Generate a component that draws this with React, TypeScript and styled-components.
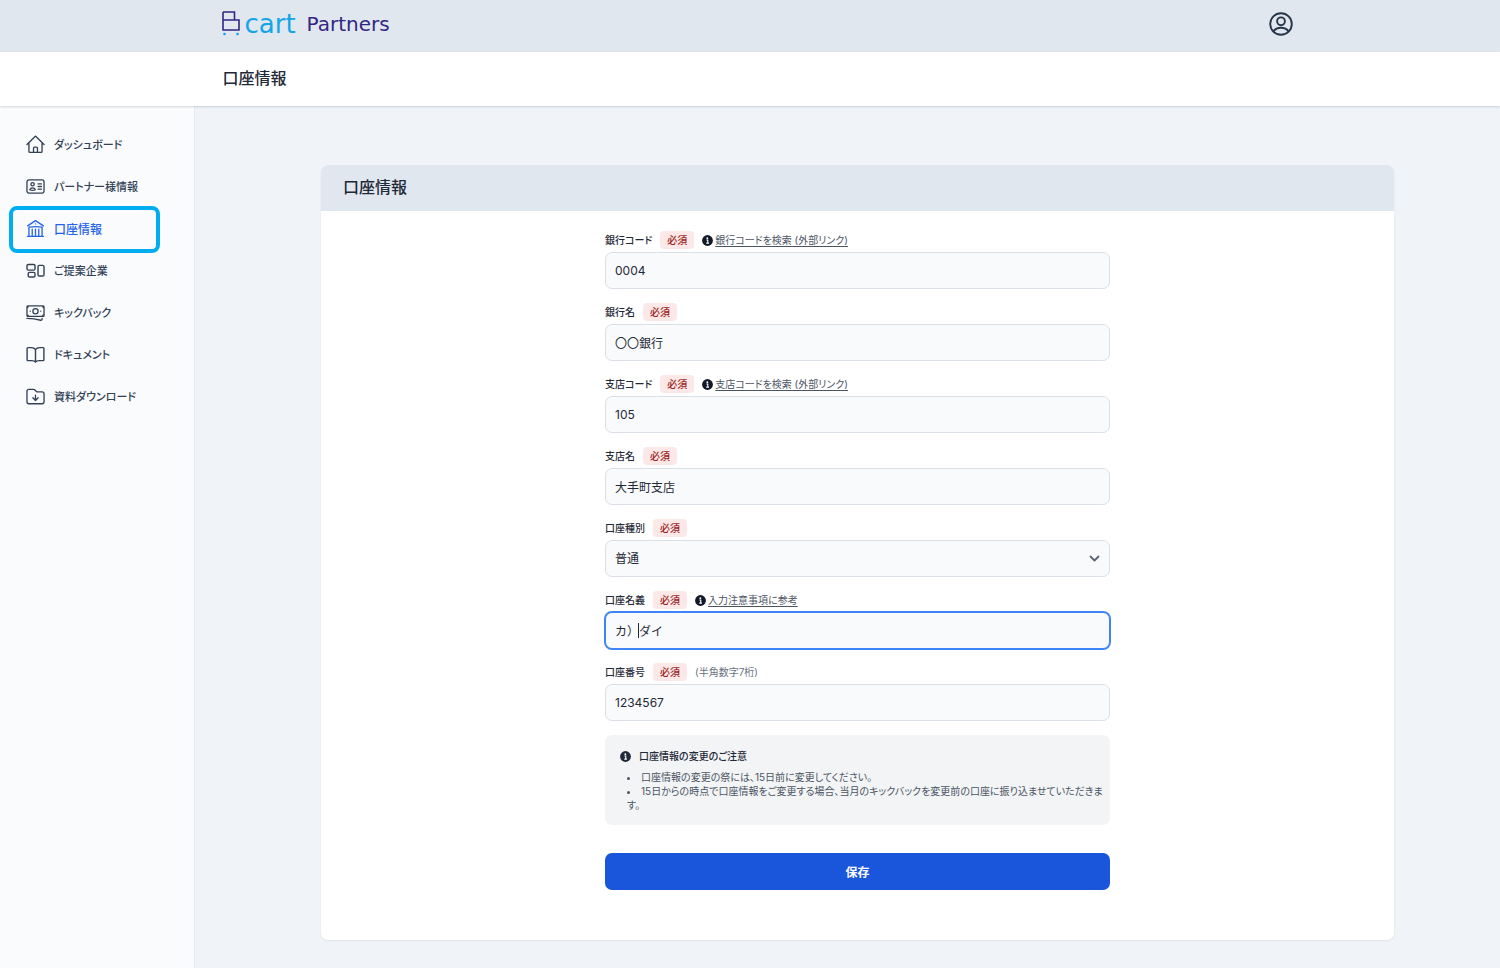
import React from "react";
import styled, { createGlobalStyle } from "styled-components";
import {
  HiOutlineHome,
  HiOutlineIdentification,
  HiOutlineBuildingLibrary,
  HiOutlineBanknotes,
  HiOutlineFolderArrowDown,
} from "react-icons/hi2";

const GlobalStyle = createGlobalStyle`
  *, *::before, *::after { box-sizing: border-box; }
  body {
    margin: 0;
    background: #f0f4f9;
    color: #1f2937;
    font-family: Inter, "Noto Sans CJK JP", sans-serif;
    font-feature-settings: "palt";
    font-size: 12px;
  }
  h1, h2, h3, p, ul { margin: 0; padding: 0; }
  a { color: inherit; text-decoration: none; }
  input, select, button { font: inherit; font-feature-settings: inherit; color: inherit; }
`;

const Page = styled.div`
  display: flex;
  flex-direction: column;
  min-height: 100vh;
`;

const TopBar = styled.header`
  background: #e1e7ef;
  padding-left: 15px;
`;

const TitleBar = styled.div`
  position: relative;
  background: #fff;
  padding-left: 17px;
  box-shadow: 0 1px 2px rgba(15, 23, 42, 0.16);
`;

const BarInner = styled.div<{ $height: number }>`
  display: flex;
  align-items: center;
  justify-content: space-between;
  max-width: 1072px;
  height: ${(p) => p.$height}px;
  margin: 0 auto;
`;

const Brand = styled.a`
  display: flex;
  align-items: center;
  height: 48px;
  margin-bottom: 4px;
  color: #312783;
`;

const BrandCart = styled.span`
  width: 62px;
  margin-left: 4px;
  color: #12a5e8;
  font-family: "DejaVu Sans", sans-serif;
  font-size: 26px;
  font-weight: 400;
  line-height: 24px;
`;

const BrandName = styled.span`
  font-family: "DejaVu Sans", sans-serif;
  font-size: 20px;
  line-height: 24px;
`;

const AccountButton = styled.button`
  display: flex;
  margin-bottom: 4px;
  padding: 0;
  border: 0;
  background: none;
  color: #27364b;
  cursor: pointer;
`;

const PageTitle = styled.h1`
  padding-bottom: 2px;
  font-size: 16px;
  font-weight: 500;
  line-height: 24px;
`;

const Columns = styled.div`
  display: flex;
  flex: 1;
`;

const Sidebar = styled.nav`
  flex: none;
  width: 195px;
  padding-top: 17px;
  background: #f9fbfd;
  border-right: 1px solid #e6ebf2;
`;

const NavList = styled.ul`
  list-style: none;
`;

const NavLink = styled.a<{ $active?: boolean }>`
  position: relative;
  display: flex;
  align-items: center;
  gap: 8px;
  height: 42px;
  padding-left: 25px;
  color: ${(p) => (p.$active ? "#2563eb" : "#334155")};
  font-size: ${(p) => (p.$active ? 12 : 11)}px;
  font-weight: 500;

  svg {
    flex: none;
    width: 21px;
    height: 21px;
  }

  ${(p) =>
    p.$active &&
    `&::after {
      content: "";
      position: absolute;
      inset: -1px 34px -4px 9px;
      border: 4px solid #00aeef;
      border-radius: 8px;
    }`}
`;

const Main = styled.main`
  flex: 1;
  min-width: 0;
  padding: 59px 0 28px 20px;
`;

const Card = styled.section`
  max-width: 1073px;
  margin: 0 auto;
  overflow: hidden;
  background: #fff;
  border-radius: 7px;
  box-shadow: 0 1px 2px rgba(15, 23, 42, 0.08);
`;

const CardHeader = styled.header`
  padding: 10px 22px 12px;
  background: #e1e7ef;
`;

const CardTitle = styled.h2`
  font-size: 16px;
  font-weight: 500;
  line-height: 24px;
`;

const Form = styled.form`
  display: flex;
  flex-direction: column;
  gap: 14px;
  max-width: 505px;
  margin: 0 auto;
  padding: 20px 0 50px;
`;

const FieldBlock = styled.div`
  display: flex;
  flex-direction: column;
  gap: 3px;
`;

const LabelRow = styled.div`
  display: flex;
  align-items: center;
  gap: 8px;
  height: 18px;
`;

const Label = styled.label`
  font-size: 10px;
  font-weight: 500;
  line-height: 16px;
`;

const Required = styled.span`
  padding: 1px 7px;
  border-radius: 4px;
  background: #fde8e8;
  color: #9b1c1c;
  font-size: 10px;
  font-weight: 500;
  line-height: 16px;
`;

const HintLink = styled.a`
  display: flex;
  align-items: center;
  gap: 2px;
  color: #4b5563;
  font-size: 10px;
  line-height: 16px;

  span {
    text-decoration: underline;
    text-underline-offset: 2px;
  }
`;

const HintText = styled.span`
  color: #6b7280;
  font-size: 10px;
  line-height: 16px;
`;

const Control = styled.div`
  position: relative;
`;

const TextInput = styled.input<{ $focused?: boolean }>`
  display: block;
  width: 100%;
  height: 37px;
  padding: 0 9px;
  border: 1px solid ${(p) => (p.$focused ? "#3f83f8" : "#dbe0e7")};
  border-radius: 7px;
  outline: none;
  background: #f9fafb;
  box-shadow: ${(p) => (p.$focused ? "0 0 0 1px #3f83f8" : "none")};
  font-size: 12px;
  font-feature-settings: normal;
`;

const Select = styled.select`
  display: block;
  width: 100%;
  height: 37px;
  padding: 0 32px 0 9px;
  border: 1px solid #dbe0e7;
  border-radius: 7px;
  appearance: none;
  background: #f9fafb;
  font-size: 12px;
`;

const Chevron = styled.svg`
  position: absolute;
  top: 13px;
  right: 10px;
  pointer-events: none;
`;

const Caret = styled.i`
  position: absolute;
  top: 11px;
  left: 33px;
  width: 1px;
  height: 15px;
  background: #1f2937;
`;

const Notice = styled.section`
  padding: 13px 5px 13px 15px;
  border-radius: 7px;
  background: #f2f4f6;
`;

const NoticeTitle = styled.h3`
  display: flex;
  align-items: center;
  gap: 8px;
  margin-bottom: 6px;
  font-size: 10px;
  font-weight: 500;
  line-height: 16px;
`;

const NoticeList = styled.ul`
  padding-left: 7px;
  color: #4b5563;
  font-size: 10px;
  line-height: 14px;
  list-style: disc inside;
`;

const SaveButton = styled.button`
  height: 37px;
  margin-top: 14px;
  border: 0;
  border-radius: 7px;
  background: #1a56db;
  color: #fff;
  font-size: 12px;
  font-weight: 700;
  cursor: pointer;
`;

function LogoMark() {
  return (
    <svg width="19" height="26" viewBox="0 0 19 26" fill="none" aria-hidden="true">
      <path d="M1 1H12.5V9H1M1 1V19H17V9H12.5" stroke="#312783" strokeWidth="1.6" />
      <circle cx="2.5" cy="23" r="1.3" fill="#12a5e8" />
      <circle cx="15.5" cy="23" r="1.3" fill="#12a5e8" />
    </svg>
  );
}

function AccountIcon() {
  return (
    <svg width="26" height="26" viewBox="0 0 26 26" fill="none" stroke="currentColor" strokeWidth="1.9" aria-hidden="true">
      <circle cx="13" cy="13" r="10.8" />
      <circle cx="13" cy="10.3" r="3.9" />
      <path d="M5.2 20.6C7 18.2 9.7 16.8 13 16.8s6 1.4 7.8 3.8" />
    </svg>
  );
}

function ProposalIcon() {
  return (
    <svg viewBox="0 0 21 21" fill="none" stroke="currentColor" strokeWidth="1.4" aria-hidden="true">
      <rect x="2" y="4.5" width="8" height="5.6" rx="1.3" />
      <rect x="3.2" y="12.4" width="6.8" height="4.6" rx="1.3" />
      <rect x="13" y="5.4" width="6" height="10.6" rx="1.3" />
    </svg>
  );
}

function BookIcon() {
  return (
    <svg viewBox="0 0 21 21" fill="none" stroke="currentColor" strokeWidth="1.4" strokeLinejoin="round" aria-hidden="true">
      <path d="M10.5 5.6C9.6 4.1 8 3.6 6.2 3.6H2.9a.8.8 0 0 0-.8.8v11.4c0 .5.3.8.8.8h4c1.5 0 2.8.4 3.6 1.5.8-1.1 2.1-1.5 3.6-1.5h4c.5 0 .8-.3.8-.8V4.4a.8.8 0 0 0-.8-.8h-3.3c-1.8 0-3.4.5-4.3 2ZM10.5 5.6v12.4" />
    </svg>
  );
}

function InfoIcon({ size, color }: { size: number; color: string }) {
  return (
    <svg width={size} height={size} viewBox="0 0 20 20" aria-hidden="true">
      <circle cx="10" cy="10" r="9.8" fill={color} />
      <circle cx="9.7" cy="5.7" r="1.7" fill="#fff" />
      <path d="M8 9h2.5v5.5M7.8 14.7h4.8" stroke="#fff" strokeWidth="2" fill="none" />
    </svg>
  );
}

const navItems = [
  { label: "ダッシュボード", icon: <HiOutlineHome /> },
  { label: "パートナー様情報", icon: <HiOutlineIdentification /> },
  { label: "口座情報", icon: <HiOutlineBuildingLibrary />, active: true },
  { label: "ご提案企業", icon: <ProposalIcon /> },
  { label: "キックバック", icon: <HiOutlineBanknotes /> },
  { label: "ドキュメント", icon: <BookIcon /> },
  { label: "資料ダウンロード", icon: <HiOutlineFolderArrowDown /> },
];

type FieldProps = {
  id: string;
  label: string;
  link?: string;
  hint?: string;
  children: React.ReactNode;
};

function Field({ id, label, link, hint, children }: FieldProps) {
  return (
    <FieldBlock>
      <LabelRow>
        <Label htmlFor={id}>{label}</Label>
        <Required>必須</Required>
        {link && (
          <HintLink href="#">
            <InfoIcon size={11} color="#111827" />
            <span>{link}</span>
          </HintLink>
        )}
        {hint && <HintText>{hint}</HintText>}
      </LabelRow>
      <Control>{children}</Control>
    </FieldBlock>
  );
}

export default function App() {
  return (
    <Page>
      <GlobalStyle />
      <TopBar>
        <BarInner $height={52}>
          <Brand href="#">
            <LogoMark />
            <BrandCart>cart</BrandCart>
            <BrandName>Partners</BrandName>
          </Brand>
          <AccountButton type="button" aria-label="アカウント">
            <AccountIcon />
          </AccountButton>
        </BarInner>
      </TopBar>
      <TitleBar>
        <BarInner $height={54}>
          <PageTitle>口座情報</PageTitle>
        </BarInner>
      </TitleBar>
      <Columns>
        <Sidebar>
          <NavList>
            {navItems.map((item) => (
              <li key={item.label}>
                <NavLink href="#" $active={item.active} aria-current={item.active ? "page" : undefined}>
                  {item.icon}
                  {item.label}
                </NavLink>
              </li>
            ))}
          </NavList>
        </Sidebar>
        <Main>
          <Card>
            <CardHeader>
              <CardTitle>口座情報</CardTitle>
            </CardHeader>
            <Form onSubmit={(e) => e.preventDefault()}>
              <Field id="bank-code" label="銀行コード" link="銀行コードを検索 (外部リンク)">
                <TextInput id="bank-code" defaultValue="0004" />
              </Field>
              <Field id="bank-name" label="銀行名">
                <TextInput id="bank-name" defaultValue="〇〇銀行" />
              </Field>
              <Field id="branch-code" label="支店コード" link="支店コードを検索 (外部リンク)">
                <TextInput id="branch-code" defaultValue="105" />
              </Field>
              <Field id="branch-name" label="支店名">
                <TextInput id="branch-name" defaultValue="大手町支店" />
              </Field>
              <Field id="account-type" label="口座種別">
                <Select id="account-type" defaultValue="普通">
                  <option>普通</option>
                  <option>当座</option>
                </Select>
                <Chevron width="11" height="11" viewBox="0 0 11 11" fill="none" stroke="#5b6472" strokeWidth="1.8" strokeLinecap="round" strokeLinejoin="round" aria-hidden="true">
                  <path d="M1.5 3.5l4 4 4-4" />
                </Chevron>
              </Field>
              <Field id="account-holder" label="口座名義" link="入力注意事項に参考">
                <TextInput id="account-holder" defaultValue="カ）ダイ" $focused />
                <Caret />
              </Field>
              <Field id="account-number" label="口座番号" hint="(半角数字7桁)">
                <TextInput id="account-number" defaultValue="1234567" />
              </Field>
              <Notice>
                <NoticeTitle>
                  <InfoIcon size={11} color="#1f2937" />
                  口座情報の変更のご注意
                </NoticeTitle>
                <NoticeList>
                  <li>口座情報の変更の祭には、15日前に変更してください。</li>
                  <li>15日からの時点で口座情報をご変更する場合、当月のキックバックを変更前の口座に振り込ませていただきます。</li>
                </NoticeList>
              </Notice>
              <SaveButton type="submit">保存</SaveButton>
            </Form>
          </Card>
        </Main>
      </Columns>
    </Page>
  );
}
